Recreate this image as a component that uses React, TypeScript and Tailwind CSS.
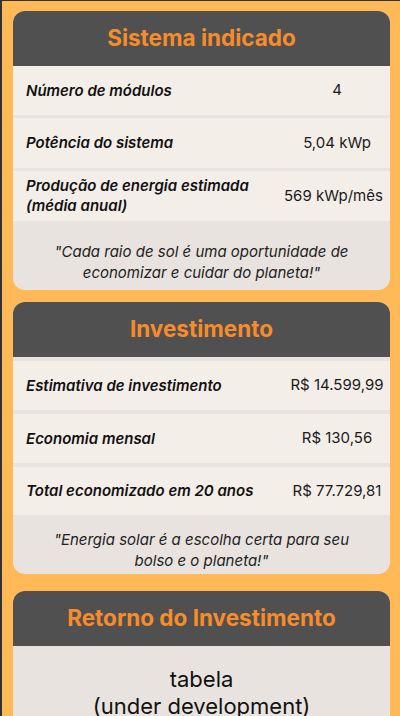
import React from "react";

type Row = { label: React.ReactNode; value: string; valueClass?: string; rowClass?: string };

function Card({
  title,
  rows,
  quote,
  rowsClass,
  quoteClass,
  className,
}: {
  title: string;
  rows: Row[];
  quote: React.ReactNode;
  rowsClass: string;
  quoteClass: string;
  className?: string;
}) {
  return (
    <div className={"rounded-xl overflow-hidden bg-[#e8e3de] " + (className ?? "")}>
      <div className="h-[55px] bg-[#505050] flex items-center justify-center">
        <h2 className="text-[22.5px] font-bold text-[#f78c2b] leading-none">{title}</h2>
      </div>
      <div className={"flex flex-col " + rowsClass}>
        {rows.map((r, i) => (
          <div key={i} className={"bg-[#f4eee9] flex items-center pl-[13px] " + (r.rowClass ?? "h-[49px]")}>
            <div className="flex-1 text-[15px] font-semibold italic text-[#111] leading-[20px]">{r.label}</div>
            <div className={"w-[106px] text-center text-[15px] text-[#1a1a1a] " + (r.valueClass ?? "")}>{r.value}</div>
          </div>
        ))}
      </div>
      <div className={"text-center italic text-[15px] text-[#222] leading-[21px] px-4 " + quoteClass}>{quote}</div>
    </div>
  );
}

export default function App() {
  return (
    <div className="bg-[#333333] pl-[2px] pt-[1px] min-h-[716px]" style={{ fontFamily: "Inter, 'Noto Sans', sans-serif" }}>
      <div className="bg-[#ffb957] pl-[11px] pr-[10px] pt-[10px] pb-[20px] min-h-[715px]">
        <Card
          title="Sistema indicado"
          rowsClass="gap-[3px]"
          quoteClass="pt-[20px] pb-[7px]"
          rows={[
            { label: "Número de módulos", value: "4" },
            { label: "Potência do sistema", value: "5,04 kWp", rowClass: "h-[50px]" },
            {
              label: (
                <>
                  Produção de energia estimada
                  <br />
                  (média anual)
                </>
              ),
              value: "569 kWp/mês",
              valueClass: "pr-[11px] whitespace-nowrap",
              rowClass: "h-[50px]",
            },
          ]}
          quote={
            <>
              "Cada raio de sol é uma oportunidade de
              <br />
              economizar e cuidar do planeta!"
            </>
          }
        />
        <Card
          className="mt-[12px]"
          title="Investimento"
          rowsClass="gap-[4px] pt-[4px]"
          quoteClass="pt-[14px] pb-[3px]"
          rows={[
            { label: "Estimativa de investimento", value: "R$ 14.599,99", valueClass: "whitespace-nowrap" },
            { label: "Economia mensal", value: "R$ 130,56" },
            { label: "Total economizado em 20 anos", value: "R$ 77.729,81", valueClass: "whitespace-nowrap", rowClass: "h-[48px]" },
          ]}
          quote={
            <>
              "Energia solar é a escolha certa para seu
              <br />
              bolso e o planeta!"
            </>
          }
        />
        <div className="mt-[17px] rounded-xl overflow-hidden bg-[#e8e3de]">
          <div className="h-[55px] bg-[#505050] flex items-center justify-center">
            <h2 className="text-[22.5px] font-bold text-[#f78c2b] leading-none">Retorno do Investimento</h2>
          </div>
          <div className="text-center text-[22px] text-[#111] leading-[27px] pt-[20px] pb-[20px]">
            tabela
            <br />
            (under development)
          </div>
        </div>
      </div>
    </div>
  );
}
